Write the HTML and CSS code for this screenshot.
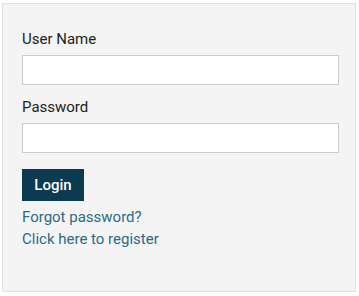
FILE: index.html
```html
<!DOCTYPE html>
<html>
<head>
<meta charset="utf-8">
<link rel="stylesheet" href="styles.css">
</head>
<body>
<div class="panel">
  <form class="login-form">
    <label class="field-label" for="user">User Name</label>
    <input class="field-input" id="user" type="text">
    <label class="field-label second" for="pass">Password</label>
    <input class="field-input" id="pass" type="password">
    <button class="login-btn" type="button">Login</button>
    <div class="links">
      <a class="link" href="#">Forgot password?</a>
      <a class="link" href="#">Click here to register</a>
    </div>
  </form>
</div>
</body>
</html>
```
FILE: styles.css
```css
html, body {
  margin: 0;
  padding: 0;
  background: #ffffff;
}
body {
  font-family: Roboto, "Liberation Sans", sans-serif;
}
.panel {
  box-sizing: border-box;
  width: 354px;
  height: 289px;
  margin: 3px 0 0 2px;
  border: 1px solid #e0e0e0;
  background: #f4f4f4;
  padding: 25px 16px 0 19px;
}
.login-form {
  display: flex;
  flex-direction: column;
  align-items: flex-start;
}
.field-label {
  font-size: 15px;
  line-height: 20px;
  color: #222222;
  margin-bottom: 6px;
}
.field-label.second {
  margin-top: 12px;
}
.field-input {
  box-sizing: border-box;
  width: 317px;
  height: 30px;
  margin: 0;
  border: 1px solid #cccccc;
  background: #ffffff;
  outline: none;
}
.login-btn {
  margin-top: 16px;
  width: 62px;
  height: 32px;
  padding: 0;
  border: none;
  background: #0c3a50;
  color: #ffffff;
  font-family: Roboto, "Liberation Sans", sans-serif;
  font-size: 15px;
  font-weight: 500;
}
.links {
  margin-top: 5px;
  display: flex;
  flex-direction: column;
}
.link {
  font-size: 15px;
  line-height: 22px;
  color: #2a6b87;
  text-decoration: none;
}
```
